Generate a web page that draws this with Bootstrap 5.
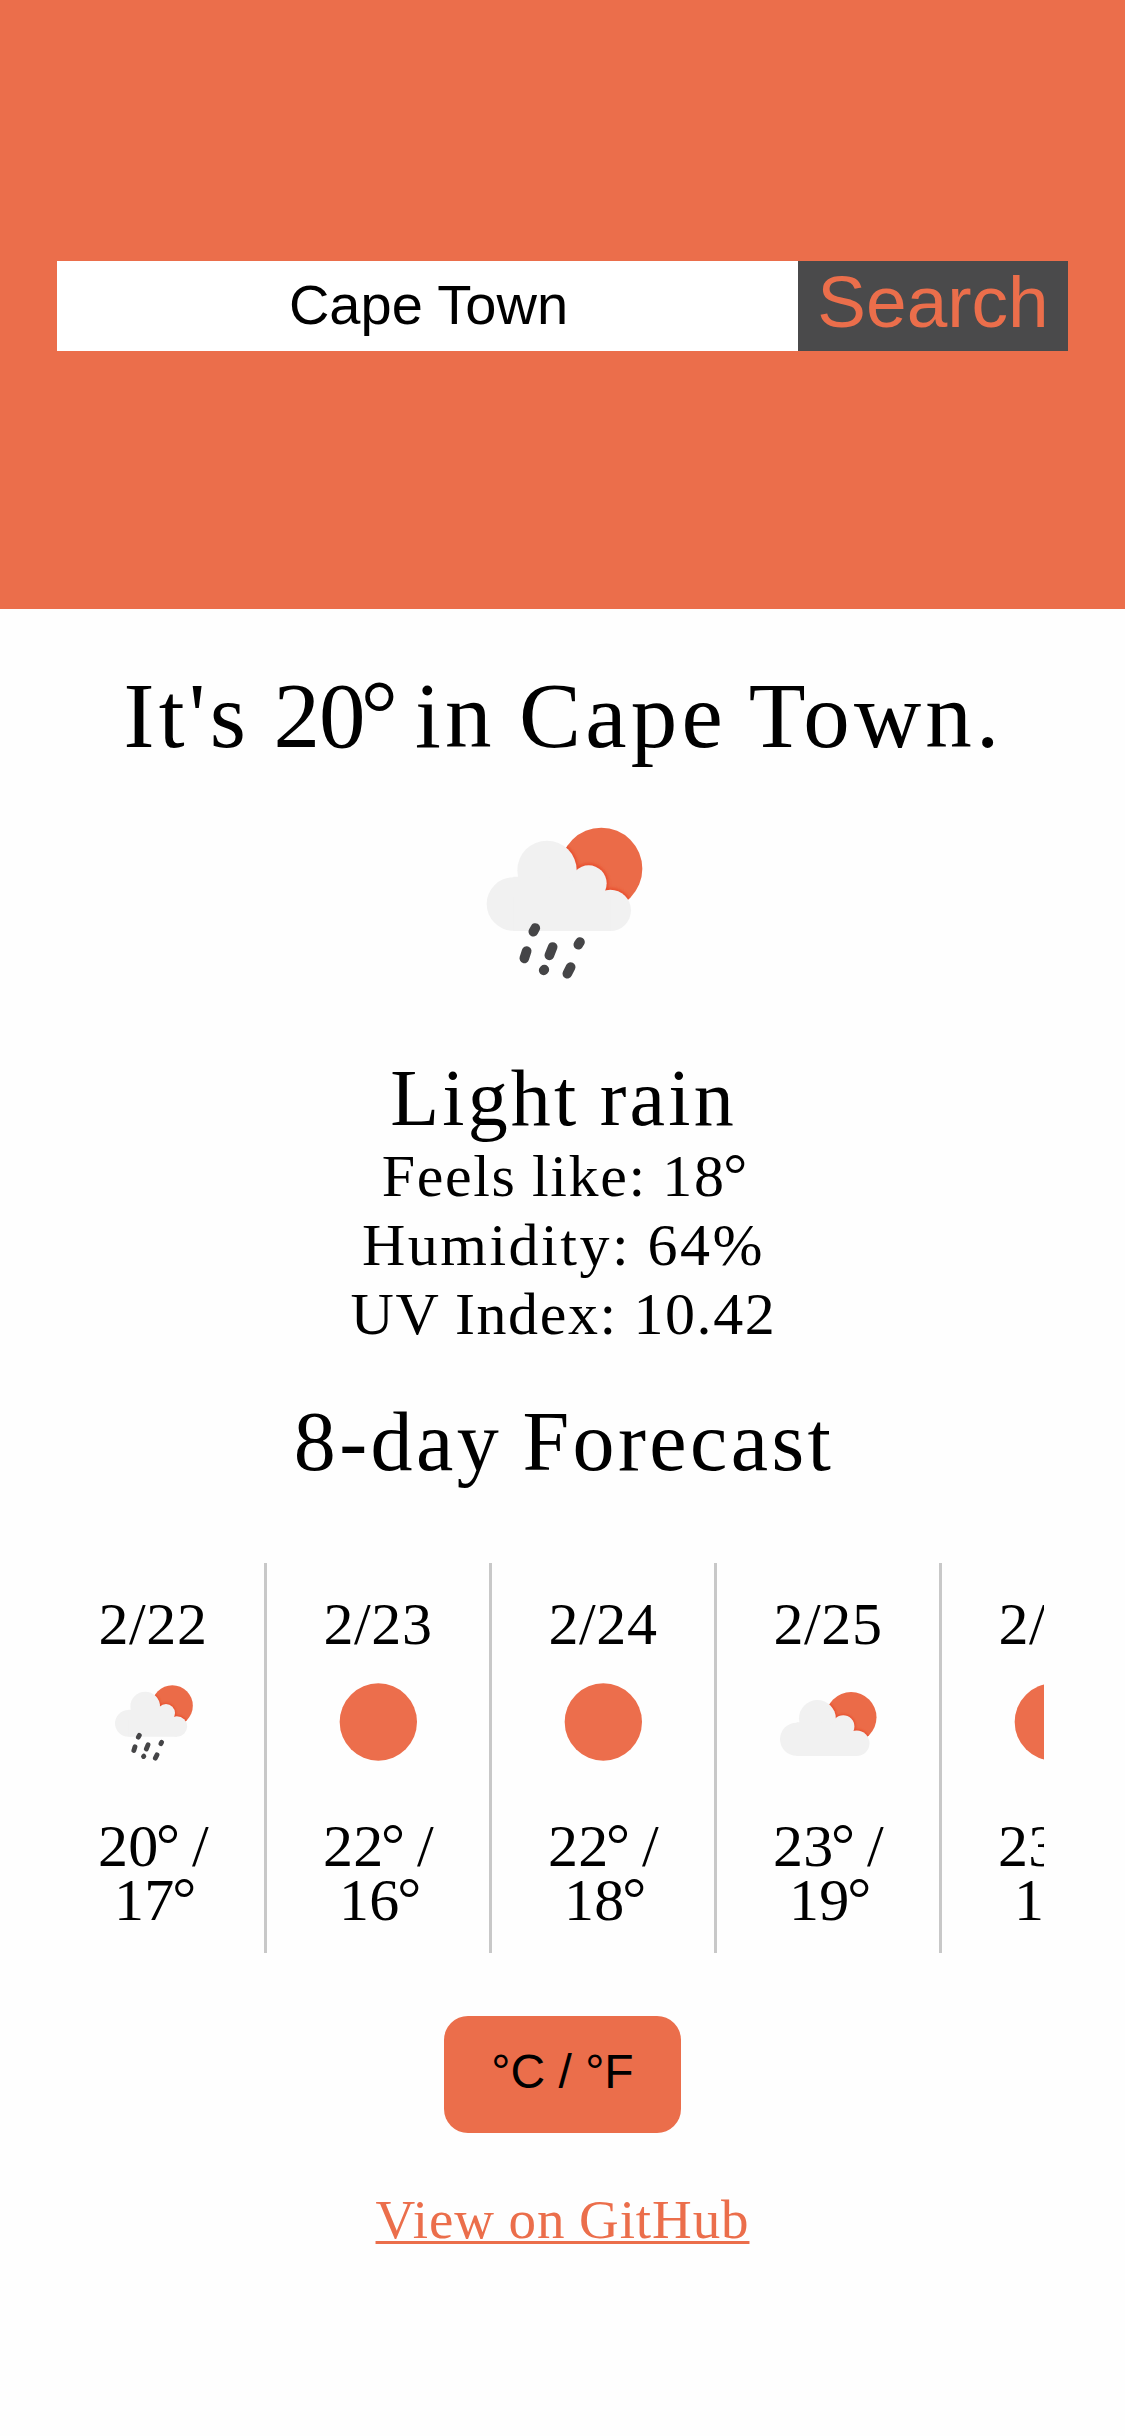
<!DOCTYPE html>
<html lang="en">
<head>
<meta charset="utf-8">
<meta name="viewport" content="width=device-width, initial-scale=1">
<title>Weather</title>
<link href="https://cdn.jsdelivr.net/npm/bootstrap@5.3.0/dist/css/bootstrap.min.css" rel="stylesheet">
<style>
:root { --coral: #eb6e4b; }
body { font-family: "Source Serif Pro", "Liberation Serif", serif; color: #000; background: #fefefe; min-height: 2436px; overflow-x: hidden; }
.hero { background: var(--coral); height: 609px; padding: 261px 57px 0; }
.search-group { height: 90px; font-family: "Liberation Sans", sans-serif; }
.search-group .form-control { font-size: 56px; line-height: 84px; color: #000; border: 0; padding: 0 0 3px 2px; background: #fff; }
.search-group .btn { width: 270px; font-size: 73px; line-height: 82px; padding: 0 0 8px; border: 0; background: #4a4a4b; color: var(--coral); }
.deg { margin-left: -.04em; margin-right: -.06em; vertical-align: .02em; line-height: 0; }
.headline { font-size: 93px; line-height: 100px; letter-spacing: 4.2px; word-spacing: -4px; margin: 57px 0 0 2px; font-weight: 400; }
.headline-temp { letter-spacing: -1px; }
.now-icon { width: 190px; height: 190px; margin: 44px 0 0 5px; }
.condition { font-size: 80px; line-height: 80px; letter-spacing: 3.2px; word-spacing: -3px; margin: 58px 0 0 2px; }
.details { font-size: 60px; line-height: 69px; letter-spacing: 1.6px; word-spacing: -1px; margin: 4px 0 0 2px; }
.humid { letter-spacing: 2.5px; }
.forecast-title { font-size: 84px; line-height: 90px; letter-spacing: 3.4px; word-spacing: -4px; margin: 48px 0 0 3px; font-weight: 400; }
.forecast { width: 963px; height: 390px; margin-top: 76px; font-size: 60px; line-height: 54px; }
.day { flex: 0 0 225px; border-right: 3px solid #c8c8c8; padding: 34px 36px 0; }
.day:first-child { margin-left: -39px; }
.day-date { letter-spacing: .6px; }
.day-icon { width: 120px; height: 100px; margin-top: 19px; }
.day-temp { letter-spacing: .3px; margin: 49px 0 0 1px; }
.unit-btn { font-family: "Liberation Sans", sans-serif; font-size: 48px; width: 237px; height: 117px; border: 0; border-radius: 24px; background: var(--coral); color: #000; margin-top: 63px; padding: 0 0 6px; }
.source-link { font-size: 55px; line-height: 60px; letter-spacing: .9px; word-spacing: -1px; margin-top: 57px; color: var(--coral); text-decoration-thickness: 3px; text-underline-offset: 3px; text-decoration-skip-ink: none; }
.source-link:hover { color: var(--coral); }
</style>
</head>
<body>
<svg width="0" height="0" class="position-absolute" aria-hidden="true">
  <defs>
    <clipPath id="sunClip"><circle cx="394" cy="176" r="123"/></clipPath>
    <filter id="soften" x="-20%" y="-20%" width="140%" height="140%"><feGaussianBlur stdDeviation="5"/></filter>
    <g id="cloudShape">
      <circle cx="130" cy="282" r="80"/><circle cx="231" cy="181" r="89"/>
      <circle cx="356" cy="220" r="54"/><circle cx="421" cy="301" r="62"/>
      <path d="M130 200H231L356 220L421 260V363H130Z"/>
    </g>
    <g id="cloudSun">
      <circle cx="394" cy="176" r="123" fill="#eb6b48"/>
      <g clip-path="url(#sunClip)"><use href="#cloudShape" fill="#e8502d" stroke="#e8502d" stroke-width="12" filter="url(#soften)"/></g>
      <use href="#cloudShape" fill="#f1f1f1"/>
    </g>
    <g id="rain" stroke="#454547" stroke-width="29" stroke-linecap="round">
      <path d="M190 365L196 354M163 445L170 423M238 436L248 411M325 404L330 396M221 481L223 479M292 491L302 471"/>
    </g>
  </defs>
</svg>

<header class="hero">
  <form class="search-group d-flex" onsubmit="return false">
    <input class="form-control rounded-0 text-center flex-fill" type="text" value="Cape Town" aria-label="City">
    <button class="btn rounded-0 flex-shrink-0" type="submit">Search</button>
  </form>
</header>

<main class="d-flex flex-column align-items-center text-center">
  <h1 class="headline mb-0">It's <span class="headline-temp">20<span class="deg">°</span></span> in Cape Town.</h1>
  <svg class="now-icon" viewBox="0 0 570 570"><use href="#cloudSun"/><use href="#rain"/></svg>
  <div class="condition">Light rain</div>
  <div class="details">
    <div>Feels like: 18<span class="deg">°</span></div>
    <div class="humid">Humidity: 64%</div>
    <div>UV Index: 10.42</div>
  </div>

  <h2 class="forecast-title mb-0">8-day Forecast</h2>
  <section class="forecast d-flex overflow-hidden">
    <div class="day d-flex flex-column align-items-center">
      <div class="day-date">2/22</div>
      <svg class="day-icon flex-shrink-0" viewBox="0 0 360 300"><g transform="translate(41 19) scale(.5)"><use href="#cloudSun"/><use href="#rain"/></g></svg>
      <div class="day-temp">20<span class="deg">°</span> /<br>17<span class="deg">°</span></div>
    </div>
    <div class="day d-flex flex-column align-items-center">
      <div class="day-date">2/23</div>
      <svg class="day-icon flex-shrink-0" viewBox="0 0 360 300"><circle cx="181" cy="156" r="116" fill="#ec6e4c"/></svg>
      <div class="day-temp">22<span class="deg">°</span> /<br>16<span class="deg">°</span></div>
    </div>
    <div class="day d-flex flex-column align-items-center">
      <div class="day-date">2/24</div>
      <svg class="day-icon flex-shrink-0" viewBox="0 0 360 300"><circle cx="181" cy="156" r="116" fill="#ec6e4c"/></svg>
      <div class="day-temp">22<span class="deg">°</span> /<br>18<span class="deg">°</span></div>
    </div>
    <div class="day d-flex flex-column align-items-center">
      <div class="day-date">2/25</div>
      <svg class="day-icon flex-shrink-0" viewBox="0 0 360 300"><g transform="translate(5 33) scale(.62)"><use href="#cloudSun"/></g></svg>
      <div class="day-temp">23<span class="deg">°</span> /<br>19<span class="deg">°</span></div>
    </div>
    <div class="day d-flex flex-column align-items-center">
      <div class="day-date">2/26</div>
      <svg class="day-icon flex-shrink-0" viewBox="0 0 360 300"><circle cx="181" cy="156" r="116" fill="#ec6e4c"/></svg>
      <div class="day-temp">23<span class="deg">°</span> /<br>19<span class="deg">°</span></div>
    </div>
  </section>

  <button class="btn unit-btn" type="button">°C / °F</button>
  <a class="source-link" href="#">View on GitHub</a>
</main>
<script src="https://cdn.jsdelivr.net/npm/bootstrap@5.3.0/dist/js/bootstrap.bundle.min.js"></script>
</body>
</html>
